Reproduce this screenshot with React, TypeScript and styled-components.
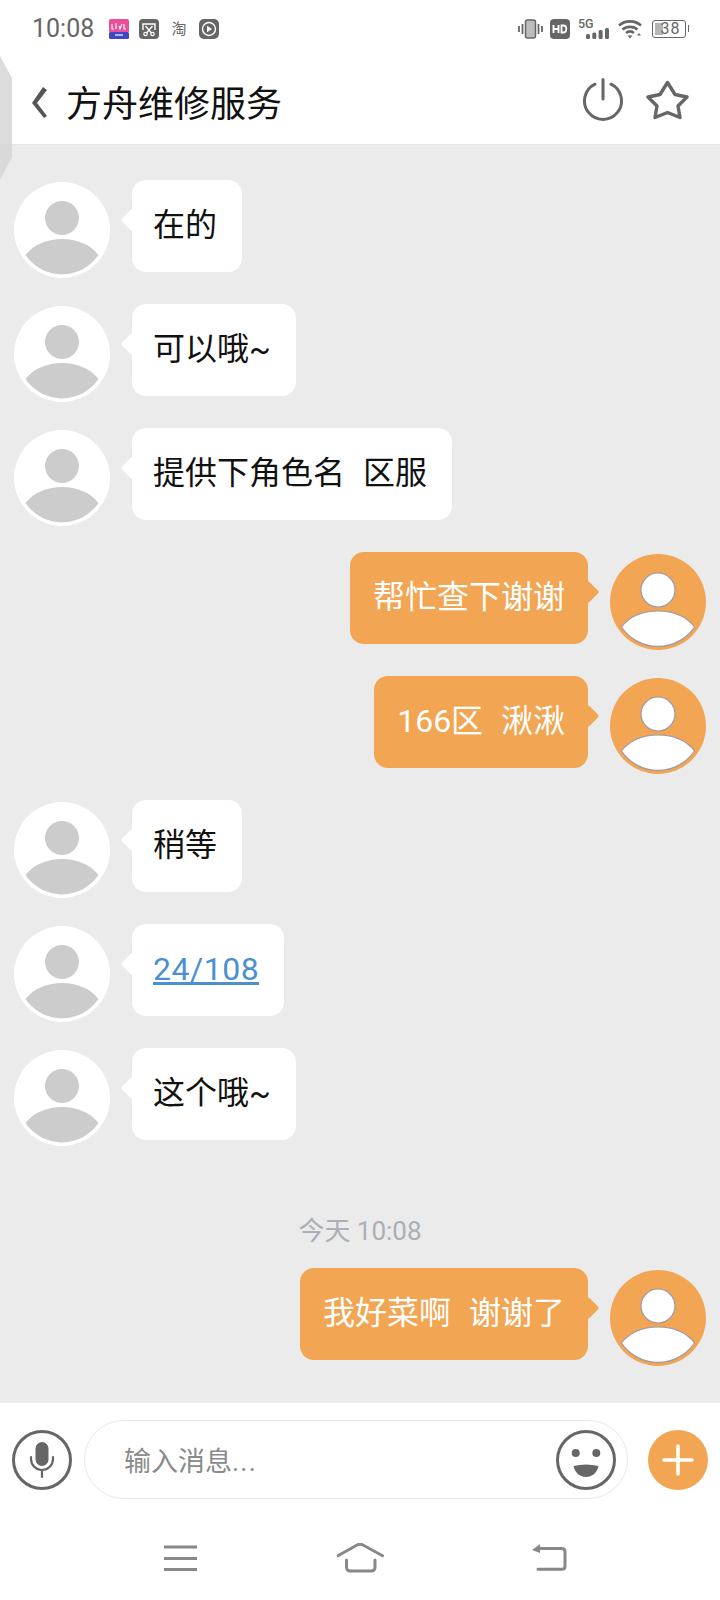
import { FC, ReactNode } from 'react';
import styled, { createGlobalStyle } from 'styled-components';

const ORANGE = '#f2a552';
const ICON = '#666666';
const FONT = 'Roboto, "Noto Sans CJK SC", "Noto Sans", sans-serif';

const GlobalStyle = createGlobalStyle`
    html, body {
        margin: 0;
        padding: 0;
        background: white;
        overflow: hidden;
    }
    * {
        box-sizing: border-box;
    }
`;

const Page = styled.div`
    position: relative;
    width: 720px;
    height: 1600px;
    display: flex;
    flex-direction: column;
    background: white;
    font-family: ${FONT};
    overflow: hidden;
`;

const EdgeHandle = styled.svg`
    position: absolute;
    top: 54px;
    left: 0;
    z-index: 5;
`;

const StatusBar = styled.div`
    height: 56px;
    flex: none;
    display: flex;
    align-items: center;
    padding: 1px 34px 0 32px;
`;

const Time = styled.span`
    font-size: 25px;
    color: #666;
    width: 77px;
`;

const StatusLeft = styled.div`
    display: flex;
    align-items: center;
    gap: 10px;
`;

const TaoText = styled.span`
    width: 20px;
    text-align: center;
    font-size: 15px;
    line-height: 20px;
    color: #666;
`;

const StatusRight = styled.div`
    margin-left: auto;
    display: flex;
    align-items: center;
`;

const SignalBox = styled.div`
    position: relative;
    width: 31px;
    height: 20px;
    margin: 0 9px 0 8px;
`;

const FiveG = styled.span`
    position: absolute;
    top: 0;
    left: 0;
    font-size: 12.5px;
    line-height: 10px;
    font-weight: 500;
    color: #666;
`;

const Battery = styled.div`
    width: 34px;
    height: 18px;
    margin-left: 10px;
    border: 1.5px solid #666;
    border-radius: 3px;
    position: relative;
    display: flex;
    align-items: center;
    justify-content: center;
    font-size: 16px;
    letter-spacing: 1px;
    color: #666;
    padding-left: 3px;
    &::before {
        content: '';
        position: absolute;
        left: 2px;
        top: 2px;
        bottom: 2px;
        width: 8px;
        background: #b5b5b5;
    }
    &::after {
        content: '';
        position: absolute;
        right: -4px;
        top: 4px;
        width: 1.5px;
        height: 7px;
        background: #666;
    }
`;

const BatteryText = styled.span`
    position: relative;
`;

const Header = styled.div`
    height: 89px;
    flex: none;
    display: flex;
    align-items: center;
    padding: 0 30px 0 32px;
    border-bottom: 1px solid #e6e6e6;
`;

const BackButton = styled.svg`
    flex: none;
    margin: 5px 19px 0 0;
`;

const Title = styled.h1`
    margin: 10px 0 0;
    font-size: 36px;
    font-weight: 400;
    color: #111;
    line-height: 50px;
`;

const HeaderActions = styled.div`
    margin-left: auto;
    display: flex;
    align-items: center;
    gap: 22px;
`;

const ChatList = styled.div`
    flex: 1;
    background: #ebebeb;
    padding: 35px 14px 0;
    display: flex;
    flex-direction: column;
`;

const Row = styled.div<{ $mine?: boolean }>`
    display: flex;
    height: 92px;
    margin-bottom: 32px;
    justify-content: ${(p) => (p.$mine ? 'flex-end' : 'flex-start')};
    gap: 22px;
`;

const AvatarBox = styled.svg`
    flex: none;
    margin-top: 2px;
`;

const Bubble = styled.div<{ $mine?: boolean }>`
    position: relative;
    height: 92px;
    padding: ${(p) => (p.$mine ? '0 23px 8px' : '0 25px 8px 21px')};
    border-radius: 14px;
    display: flex;
    align-items: center;
    white-space: pre;
    word-spacing: 1px;
    font-size: 32px;
    background: ${(p) => (p.$mine ? ORANGE : 'white')};
    color: ${(p) => (p.$mine ? 'white' : '#111')};
    order: ${(p) => (p.$mine ? -1 : 0)};
    &::before {
        content: '';
        position: absolute;
        top: 32px;
        ${(p) => (p.$mine ? 'right: -8px;' : 'left: -8px;')}
        width: 16px;
        height: 16px;
        background: inherit;
        border-radius: 2px;
        transform: rotate(45deg);
    }
`;

const MessageLink = styled.a`
    display: inline-block;
    margin-top: 6px;
    letter-spacing: 0.5px;
    color: #4a90d2;
    text-decoration: underline;
`;

const Stamp = styled.div`
    text-align: center;
    font-size: 26px;
    line-height: 36px;
    color: #aab0b6;
    margin: 41px 0 19px;
`;

const Composer = styled.div`
    height: 122px;
    flex: none;
    display: flex;
    align-items: center;
    padding: 17px 12px 26px;
    gap: 12px;
`;

const Field = styled.div`
    flex: 1;
    height: 79px;
    display: flex;
    align-items: center;
    padding: 0 11px 0 39px;
    border: 1.5px solid #e9e9e9;
    border-radius: 40px;
`;

const Placeholder = styled.span`
    flex: 1;
    font-size: 27px;
    color: #8a8a8a;
`;

const Dots = styled.span`
    letter-spacing: 1.2px;
`;

const AddButton = styled.div`
    flex: none;
    width: 60px;
    height: 60px;
    margin-left: 8px;
    border-radius: 50%;
    background: ${ORANGE};
    display: flex;
    align-items: center;
    justify-content: center;
`;

const NavBar = styled.div`
    height: 75px;
    flex: none;
    display: flex;
    align-items: flex-start;
    padding: 18px 0 0 164px;
`;

const NavSlot = styled.svg<{ $gap: number }>`
    flex: none;
    margin-right: ${(p) => p.$gap}px;
`;

const Avatar: FC<{ mine?: boolean }> = ({ mine }) => (
    <AvatarBox width="96" height="96" viewBox="0 0 96 96">
        <circle cx="48" cy="48" r="48" fill={mine ? ORANGE : 'white'} />
        <g fill={mine ? 'white' : '#cccccc'} stroke={mine ? '#9b9aae' : 'none'} strokeWidth="1.2">
            <circle cx="48" cy="36" r="17" />
            <path d="M11.5 73 C20 62 34 57 48 57 C62 57 76 62 84.5 73 A44 44 0 0 1 11.5 73 Z" />
        </g>
    </AvatarBox>
);

const Message: FC<{ mine?: boolean; children: ReactNode }> = ({ mine, children }) => (
    <Row $mine={mine}>
        <Avatar mine={mine} />
        <Bubble $mine={mine}>{children}</Bubble>
    </Row>
);

const App: FC = () => (
    <Page>
        <GlobalStyle />
        <EdgeHandle width="13" height="130" viewBox="0 0 13 130">
            <path d="M0 2 L12 24 L12 103 L0 126 Z" fill="#d6d6d6" opacity="0.85" />
        </EdgeHandle>

        <StatusBar>
            <Time>10:08</Time>
            <StatusLeft>
                <svg width="20" height="20" viewBox="0 0 20 20">
                    <rect width="20" height="14" y="0" rx="2" fill="#ec4f9a" />
                    <rect width="20" height="7" y="13" rx="1.5" fill="#3f46c8" />
                    <path d="M3 5v5h2M7 4v6M10 7l1 3 2-5M15 5v5h2" stroke="white" strokeWidth="1.1" fill="none" />
                    <path d="M6 16h8" stroke="white" strokeWidth="1.2" />
                </svg>
                <svg width="20" height="20" viewBox="0 0 20 20">
                    <rect width="20" height="20" rx="4" fill={ICON} />
                    <path d="M4 11V5h12v6" stroke="white" strokeWidth="1.4" fill="none" />
                    <path d="M6.500 7l6 7M13.500 7l-6 7" stroke="white" strokeWidth="1.4" />
                    <circle cx="6.500" cy="15" r="1.700" stroke="white" strokeWidth="1.2" fill="none" />
                    <circle cx="13.500" cy="15" r="1.700" stroke="white" strokeWidth="1.2" fill="none" />
                </svg>
                <TaoText>淘</TaoText>
                <svg width="20" height="20" viewBox="0 0 20 20">
                    <rect width="20" height="20" rx="5" fill={ICON} />
                    <circle cx="10" cy="10" r="6.500" stroke="white" strokeWidth="1.4" fill="none" />
                    <path d="M8 6.800v6.400l5-3.200z" fill="white" />
                </svg>
            </StatusLeft>
            <StatusRight>
                <svg width="25" height="20" viewBox="0 0 25 20">
                    <path d="M1 7v6M4.500 5v10M20.500 5v10M24 7v6" stroke={ICON} strokeWidth="1.800" />
                    <rect x="7.500" y="1" width="10" height="18" rx="2" fill="#bdbdbd" stroke={ICON} strokeWidth="1.500" />
                </svg>
                <svg width="20" height="20" viewBox="0 0 20 20" style={{ marginLeft: 7 }}>
                    <rect width="20" height="20" rx="4" fill={ICON} />
                    <path d="M3.500 6v8M8.500 6v8M3.500 10h5" stroke="white" strokeWidth="1.900" />
                    <path d="M11.500 6.500v7h2a2.800 3.500 0 0 0 0-7z" stroke="white" strokeWidth="1.800" fill="none" />
                </svg>
                <SignalBox>
                    <FiveG>5G</FiveG>
                    <svg width="31" height="20" viewBox="0 0 31 20">
                        <rect x="8" y="15" width="4" height="5" rx="1.500" fill={ICON} />
                        <rect x="14.300" y="13.500" width="4" height="6.500" rx="1.500" fill={ICON} />
                        <rect x="20.600" y="11" width="4" height="9" rx="1.500" fill={ICON} />
                        <rect x="27" y="9" width="4" height="11" rx="1.500" fill={ICON} />
                    </svg>
                </SignalBox>
                <svg width="24" height="20" viewBox="0 0 24 20">
                    <path d="M1 6.500C7 1 17 1 23 6.500M4.500 10.500C8.500 7 15.500 7 19.500 10.500M8 14c2.500-2 5.500-2 8 0" stroke={ICON} strokeWidth="2.600" fill="none" />
                    <path d="M9.500 16.500L12 19.500L14.500 16.500Z" fill={ICON} />
                    <path d="M19 16.500h4l-2-2.500z" fill={ICON} />
                </svg>
                <Battery>
                    <BatteryText>38</BatteryText>
                </Battery>
            </StatusRight>
        </StatusBar>

        <Header>
            <BackButton width="15" height="32" viewBox="0 0 15 32">
                <path d="M11 0 L15 3 L5 16 L15 29 L12 31 L0 16 Z" fill="#555" />
            </BackButton>
            <Title>方舟维修服务</Title>
            <HeaderActions>
                <svg width="42" height="44" viewBox="0 0 42 44">
                    <path d="M13 6.200 A18.500 18.500 0 1 0 29 6.200" stroke={ICON} strokeWidth="3" fill="none" strokeLinecap="round" />
                    <path d="M21 1.500 V21" stroke={ICON} strokeWidth="3" strokeLinecap="round" />
                </svg>
                <svg width="44" height="42" viewBox="0 0 44 42">
                    <path d="M21.500 3.500 L29 15.500 L41 18 L32 27 L34 38.500 L21.500 33.500 L9 38.500 L11 27 L2 18 L14 15.500 Z" stroke={ICON} strokeWidth="3.400" strokeLinejoin="round" fill="none" />
                </svg>
            </HeaderActions>
        </Header>

        <ChatList>
            <Message>在的</Message>
            <Message>可以哦~</Message>
            <Message>提供下角色名  区服</Message>
            <Message mine>帮忙查下谢谢</Message>
            <Message mine>166区  湫湫</Message>
            <Message>稍等</Message>
            <Message><MessageLink>24/108</MessageLink></Message>
            <Message>这个哦~</Message>
            <Stamp>今天 10:08</Stamp>
            <Message mine>我好菜啊  谢谢了</Message>
        </ChatList>

        <Composer>
            <svg width="60" height="60" viewBox="0 0 60 60" style={{ flex: 'none' }}>
                <circle cx="30" cy="30" r="28.500" stroke={ICON} strokeWidth="3" fill="white" />
                <rect x="23.500" y="12" width="13" height="24" rx="6.500" fill={ICON} />
                <path d="M19 27 V29 A11 11 0 0 0 41 29 V27 M30 40 V47" stroke={ICON} strokeWidth="2.200" fill="none" strokeLinecap="round" />
            </svg>
            <Field>
                <Placeholder>输入消息<Dots>...</Dots></Placeholder>
                <svg width="60" height="60" viewBox="0 0 60 60" style={{ flex: 'none' }}>
                    <circle cx="30" cy="30" r="28.500" stroke={ICON} strokeWidth="3" fill="white" />
                    <circle cx="19.700" cy="23" r="4" fill={ICON} />
                    <circle cx="40.300" cy="23" r="4" fill={ICON} />
                    <path d="M17.500 36 Q30 33 42.500 36 C41 43 36 47 30 47 C24 47 19 43 17.500 36 Z" fill={ICON} />
                </svg>
            </Field>
            <AddButton>
                <svg width="32" height="32" viewBox="0 0 32 32">
                    <path d="M16 2 V30 M2 16 H30" stroke="white" strokeWidth="3.500" strokeLinecap="round" />
                </svg>
            </AddButton>
        </Composer>

        <NavBar>
            <NavSlot $gap={140} width="33" height="30" viewBox="0 0 33 30">
                <path d="M0 4 H33 M0 15.500 H33 M0 26.500 H33" stroke="#888" strokeWidth="3" />
            </NavSlot>
            <NavSlot $gap={148} width="47" height="30" viewBox="0 0 47 30">
                <path d="M1 12.700 L20 2 Q23 0.500 26 2 L45.500 12.700" stroke="#888" strokeWidth="3" fill="none" strokeLinecap="round" />
                <path d="M9.500 17 V24 Q9.500 28 13.500 28 H34 Q38 28 38 24 V17" stroke="#888" strokeWidth="3" fill="none" strokeLinecap="round" />
            </NavSlot>
            <NavSlot $gap={0} width="36" height="30" viewBox="0 0 36 30">
                <path d="M0 7 L8 1 L8 10 Z" fill="#888" />
                <path d="M8 5.500 H30 Q33 5.500 33 8.500 V23.300 Q33 26.300 30 26.300 H6" stroke="#888" strokeWidth="3" fill="none" strokeLinecap="round" />
            </NavSlot>
        </NavBar>
    </Page>
);

export default App;
